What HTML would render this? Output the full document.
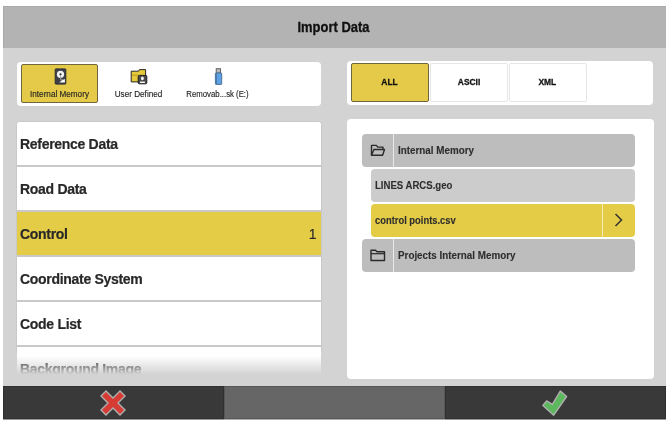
<!DOCTYPE html>
<html><head><meta charset="utf-8">
<style>
*{box-sizing:border-box;margin:0;padding:0}
html,body{width:670px;height:423px;background:#fff;overflow:hidden;font-family:"Liberation Sans",sans-serif;font-variant-ligatures:none}
.abs{position:absolute}
#app{will-change:transform;position:absolute;left:3px;top:6px;width:663px;height:414px;background:#d3d3d3;overflow:hidden}
#hdr{position:absolute;left:0;top:0;width:663px;height:42px;background:#b3b3b3;border-top:1px solid #a9a9a9;border-left:1px solid #a9a9a9}
#hdr span{position:absolute;left:-2px;width:663px;top:12px;text-align:center;font-weight:bold;font-size:14px;line-height:16px;color:#111;-webkit-text-stroke:0.3px #111;transform:scaleX(0.925)}
.panel{position:absolute;background:#fff;border-radius:4px}
.src{position:absolute;top:2px;width:77px;height:38.5px;font-size:8px;color:#252525;text-align:center}
.src.sel{background:#e4ca48;border:1px solid #6f6640;border-radius:2px}
.src span{position:absolute;left:-10px;right:-10px;top:24.5px;line-height:10px;white-space:nowrap;font-size:9.4px;-webkit-text-stroke:0.15px #252525;transform:scaleX(0.87)}
.flt{position:absolute;top:2px;width:77.5px;height:38.5px;border:1px solid #e6e6e6;border-radius:2px;font-size:9.8px;font-weight:bold;color:#111;text-align:center;line-height:35.5px;-webkit-text-stroke:0.3px #111}
.flt span{display:inline-block;transform:scaleX(0.86)}
.src.sel span{top:23.6px;left:-11px;right:-11px}
.flt.sel{background:#e4ca48;border:1px solid #6f6640;border-radius:2px}
.row{position:absolute;left:0;width:304px;height:45px;border-bottom:2px solid #c9c9c9;font-weight:bold;font-size:14px;letter-spacing:-0.3px;color:#282828;padding-left:3px;line-height:44.5px;background:#fff;-webkit-text-stroke:0.2px #282828}
.row.sel{background:#e4cc47}
.fr{position:absolute;border-radius:4px;font-weight:bold;font-size:10.2px;color:#2e2e2e;line-height:34px;-webkit-text-stroke:0.12px #2e2e2e}
.fr span{transform-origin:0 50%;transform:scaleX(0.965);white-space:nowrap}
.bar{position:absolute;top:380px;height:33px;border:1px solid rgba(0,0,0,0.14)}
.bar2{position:absolute;top:413px;height:1px}
</style></head><body>
<div id="app">
  <div id="hdr"><span>Import Data</span></div>

  <!-- left source panel -->
  <div class="panel" style="left:14px;top:56px;width:304px;height:43.5px;">
    <div class="src sel" style="left:4px;">
      <svg class="abs" style="left:31.5px;top:3.2px" width="13" height="17" viewBox="0 0 13 17">
        <rect x="1.2" y="0.9" width="10.6" height="15.2" rx="0.6" fill="#3d4049" stroke="#2a2c33" stroke-width="1"/>
        <circle cx="6.5" cy="6.3" r="3.6" fill="#f2f2f2"/>
        <circle cx="6.5" cy="6.3" r="1.1" fill="#2e3038"/>
        <path d="M6.6 7.4 L6.6 12 L8.8 11.4" fill="none" stroke="#9a9a9a" stroke-width="0.9"/>
        <path d="M5.4 14.6 L10.9 14.6 L10.9 11 L7.6 12.6 Z" fill="#fff"/>
      </svg>
      <span>Internal Memory</span>
    </div>
    <div class="src" style="left:83px;">
      <svg class="abs" style="left:30px;top:4px" width="18" height="17" viewBox="0 0 18 17">
        <path d="M1.2 13.9 L1.2 3.2 L8.6 3.2 L9.4 1.6 L15.6 1.6 L15.6 13.9 Z" fill="#e6c93a" stroke="#262626" stroke-width="1"/>
        <path d="M1.7 7.2 L8 7.2" stroke="#a48b22" stroke-width="0.8"/>
        <rect x="8.2" y="7.4" width="8.6" height="8.4" rx="1" fill="#4b4b4b" stroke="#1e1e1e" stroke-width="1"/>
        <ellipse cx="12.4" cy="10.4" rx="1.4" ry="1.8" fill="#fff"/>
        <rect x="10" y="13.6" width="4.9" height="1.4" fill="#fff"/>
      </svg>
      <span>User Defined</span>
    </div>
    <div class="src" style="left:162px;">
      <svg class="abs" style="left:35px;top:4px" width="9" height="17" viewBox="0 0 9 17">
        <rect x="2.2" y="0.7" width="4.4" height="4.4" fill="#b8b8b8" stroke="#5a5a5a" stroke-width="0.9"/>
        <rect x="1.4" y="5" width="6.3" height="11.4" rx="0.6" fill="#5ca2e4" stroke="#456a90" stroke-width="0.9"/>
        <rect x="1.8" y="5.4" width="1.2" height="10.6" fill="#4b7cab"/>
      </svg>
      <span style="transform:scaleX(0.83)">Removab...sk (E:)</span>
    </div>
  </div>

  <!-- right filter panel -->
  <div class="panel" style="left:344px;top:55px;width:306px;height:43.5px;">
    <div class="flt sel" style="left:4px;"><span>ALL</span></div>
    <div class="flt" style="left:83px;"><span>ASCII</span></div>
    <div class="flt" style="left:162px;"><span>XML</span></div>
  </div>

  <!-- left list -->
  <div class="abs" style="left:14px;top:115.5px;width:304px;height:230px;border-radius:3px 3px 0 0;box-shadow:0 0 1.2px rgba(0,0,0,0.3)"></div>
  <div class="panel" style="left:14px;top:115.5px;width:304px;height:254px;border-radius:3px 3px 0 0;overflow:hidden">
    <div class="row" style="top:0">Reference Data</div>
    <div class="row" style="top:45px">Road Data</div>
    <div class="row sel" style="top:90px">Control<span style="position:absolute;right:4.5px;font-weight:normal;letter-spacing:0;-webkit-text-stroke:0.1px #282828">1</span></div>
    <div class="row" style="top:135px">Coordinate System</div>
    <div class="row" style="top:180px">Code List</div>
    <div class="row" style="top:225px">Background Image</div>
    <div class="abs" style="left:0;top:234.5px;width:304px;height:20px;background:linear-gradient(to bottom,rgba(211,211,211,0),rgba(211,211,211,1) 92%)"></div>
  </div>

  <!-- right list -->
  <div class="panel" style="left:344px;top:113px;width:306.5px;height:260px;">
    <div class="fr" style="left:14.5px;top:15px;width:273.5px;height:32.5px;background:#bdbdbd">
      <div class="abs" style="left:31.5px;top:0;width:1px;height:32.5px;background:#e8e8e8"></div>
      <svg class="abs" style="left:8px;top:9.5px" width="16" height="13" viewBox="0 0 16 13">
        <path d="M1.5 11.2 L1.5 1.4 L6.3 1.4 L7.8 3.1 L13 3.1 L13 5.5" fill="none" stroke="#2a2a2a" stroke-width="1.4" stroke-linejoin="round"/>
        <path d="M1.5 11.2 L3.9 5.5 L14.5 5.5 L12.6 11.2 Z" fill="none" stroke="#2a2a2a" stroke-width="1.4" stroke-linejoin="round"/>
      </svg>
      <span class="abs" style="left:36px;top:0">Internal Memory</span>
    </div>
    <div class="fr" style="left:24px;top:50px;width:264px;height:32.5px;background:#cccccc">
      <span class="abs" style="left:3.5px;top:0;transform:scaleX(0.94)">LINES ARCS.geo</span>
    </div>
    <div class="fr" style="left:24px;top:85px;width:264px;height:33px;background:#e4cc47">
      <div class="abs" style="left:231px;top:0;width:1px;height:33px;background:#f3eab5"></div>
      <svg class="abs" style="left:243px;top:8.7px" width="9" height="14" viewBox="0 0 9 14">
        <path d="M1.5 1 L7.5 7 L1.5 13" fill="none" stroke="#333" stroke-width="1.5"/>
      </svg>
      <span class="abs" style="left:4px;top:0;transform:scaleX(0.92)">control points.csv</span>
    </div>
    <div class="fr" style="left:14.5px;top:120px;width:273.5px;height:33px;background:#bdbdbd">
      <div class="abs" style="left:31.5px;top:0;width:1px;height:33px;background:#e8e8e8"></div>
      <svg class="abs" style="left:8px;top:9.5px" width="16" height="13" viewBox="0 0 16 13">
        <path d="M1 11.5 L1 1.2 L5.5 1.2 L7 2.7 L14.5 2.7 L14.5 11.5 Z" fill="none" stroke="#2a2a2a" stroke-width="1.4" stroke-linejoin="round"/>
        <path d="M1 4.7 L14.5 4.7" stroke="#2a2a2a" stroke-width="1.2"/>
      </svg>
      <span class="abs" style="left:36px;top:0">Projects Internal Memory</span>
    </div>
  </div>

  <!-- bottom bar -->
  <div class="bar" style="left:0;width:221px;background:#393939"></div>
  <div class="bar" style="left:221px;width:221px;background:#666666"></div>
  <div class="bar" style="left:442px;width:221px;background:#393939"></div>
  <div class="bar2" style="left:0;width:221px;background:#9a9a9a"></div><div class="bar2" style="left:221px;width:221px;background:#b0b0b0"></div><div class="bar2" style="left:442px;width:221px;background:#9a9a9a"></div>
  <svg class="abs" style="left:97px;top:384px" width="26" height="26" viewBox="0 0 26 26">
    <path d="M1 6 L6 1 L13 8 L20 1 L25 6 L18 13 L25 20 L20 25 L13 18 L6 25 L1 20 L8 13 Z" fill="#d63b34" stroke="#b0b0b0" stroke-width="1.4" stroke-linejoin="miter"/>
  </svg>
  <svg class="abs" style="left:539px;top:384px" width="26" height="26" viewBox="0 0 26 26">
    <path d="M4.6 10.9 L10.4 14.3 L18.3 1.1 L24.6 6.5 L11.7 25.2 L0.9 15.4 Z" fill="#5cb85c" stroke="#b0b0b0" stroke-width="1.4" stroke-linejoin="round"/>
  </svg>
</div>
</body></html>
